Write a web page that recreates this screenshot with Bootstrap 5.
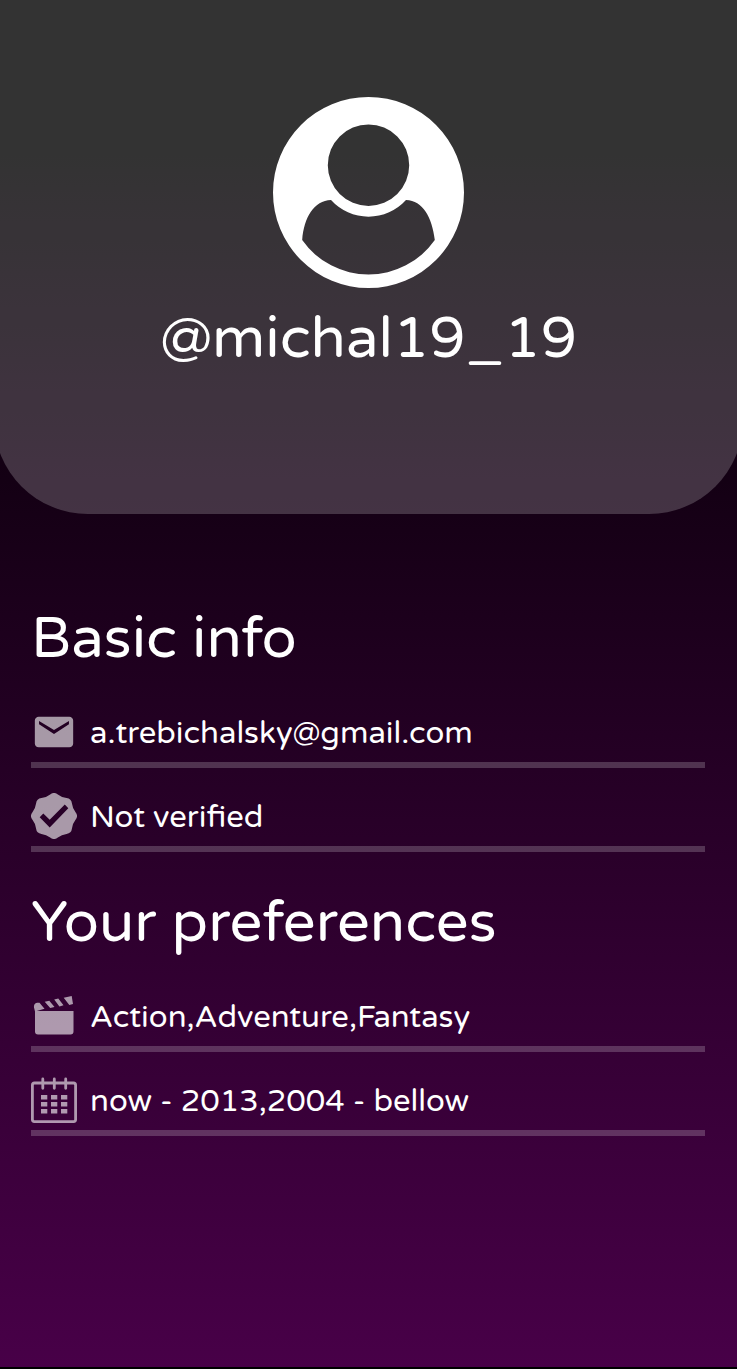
<!DOCTYPE html>
<html lang="en">
<head>
<meta charset="utf-8">
<meta name="viewport" content="width=device-width, initial-scale=1">
<title>Profile</title>
<link rel="stylesheet" href="https://cdn.jsdelivr.net/npm/bootstrap@5.3.0/dist/css/bootstrap.min.css">
<style>
  body {
    background: linear-gradient(#000 10%, #480048);
    color: #fff;
    font-family: "Varela Round", "Noto Sans", sans-serif;
    border-bottom: 2px solid #000;
  }
  .profile-head {
    margin: 0 -6px;
    padding: 97px 0 135px;
    gap: 11px;
    background: rgba(255, 255, 255, .2);
    border-radius: 0 0 94px 94px;
  }
  .avatar { width: 191px; height: 191px; }
  .title-text { font-size: 58px; line-height: 80px; font-weight: 400; }
  .info-area { padding: 85px 32px 0 31px; }
  .info-area section + section { margin-top: 31px; }
  .info-area .title-text { margin-bottom: 5px; }
  .info-row {
    height: 84px;
    padding-top: 18px;
    gap: 13px;
    font-size: 31px;
    line-height: 50px;
    border-bottom: 6px solid rgba(255, 255, 255, .2);
  }
  .info-row svg { width: 46px; height: 46px; flex: none; fill: #fff; opacity: .6; }
</style>
</head>
<body class="min-vh-100 overflow-x-hidden">
<header class="profile-head d-flex flex-column align-items-center">
  <svg class="avatar" viewBox="0 0 191 191" role="img" aria-label="Avatar">
    <path fill="#fff" fill-rule="evenodd" d="M95.500 0a95.500 95.500 0 1 1 0 191a95.500 95.500 0 1 1 0-191zM95.500 27.500a40.700 40.700 0 1 0 0 81.400a40.700 40.700 0 1 0 0-81.400zM58 103C41 103.500 31 120.500 29.200 143A81 81 0 0 0 161.800 143C159 120.500 150 103.500 133 103A50.500 50.500 0 0 1 58 103z"/>
  </svg>
  <h1 class="title-text mb-0">@michal19_19</h1>
</header>
<main class="info-area">
  <section>
    <h2 class="title-text">Basic info</h2>
    <div class="info-row d-flex align-items-center">
      <svg viewBox="0 0 24 24" aria-hidden="true"><path d="M20 4H4c-1.100 0-2 .9-2 2v12c0 1.100.9 2 2 2h16c1.100 0 2-.9 2-2V6c0-1.100-.9-2-2-2zm-.2 4L12 13 4.200 8V6.300L12 11l7.800-4.700z"/></svg>
      <span class="pt-1">a.trebichalsky@gmail.com</span>
    </div>
    <div class="info-row d-flex align-items-center">
      <svg viewBox="-23 -23 46 46" aria-hidden="true"><path fill-rule="evenodd" d="M21.550-3.850Q24.600 0 21.550 3.850Q18.500 7.700 17.950 12.550Q17.400 17.400 12.550 17.950Q7.700 18.500 3.850 21.550Q0 24.600-3.850 21.550Q-7.700 18.500-12.550 17.950Q-17.400 17.400-17.950 12.550Q-18.500 7.700-21.550 3.850Q-24.600 0-21.550-3.850Q-18.500-7.700-17.950-12.550Q-17.400-17.400-12.550-17.950Q-7.700-18.500-3.850-21.550Q0-24.600 3.850-21.550Q7.700-18.500 12.550-17.950Q17.400-17.400 17.950-12.550Q18.500-7.700 21.550-3.850zM-14.300 1.300L-4.300 11.500L14.300-7.700L10.800-11.500L-4.300 3.700L-10.700-2.500z"/></svg>
      <span class="pt-1">Not verified</span>
    </div>
  </section>
  <section>
    <h2 class="title-text">Your preferences</h2>
    <div class="info-row d-flex align-items-center">
      <svg viewBox="0 0 46 46" aria-hidden="true"><path d="M4 18h38.500v20.500q0 3-3 3H7q-3 0-3-3zM4 18.500L3 14.500Q2.500 10.500 6 9.700H8.500L13.500 15.800zM13.700 8.800L18.300 7.800L23.500 14L19.200 15zM23.200 6.500L27.300 5.600L32.500 12.200L28.400 13.400zM32.700 4.700L40.700 3L42 11L38.300 11.900z"/></svg>
      <span class="pt-1">Action,Adventure,Fantasy</span>
    </div>
    <div class="info-row d-flex align-items-center">
      <svg viewBox="0 0 46 46" aria-hidden="true"><path fill="none" stroke="#fff" stroke-width="2.800" stroke-linecap="round" d="M10.500 6H3.400q-2 0-2 2V42.600q0 2 2 2H42.600q2 0 2-2V8q0-2-2-2H3.400M11.800 2V11.300M23.300 2V11.300M34.700 2V11.300"/><path d="M10 18h6.300v4.500h-6.300zM20 18h6.300v4.500h-6.300zM30 18h6.300v4.500h-6.300zM10 25h6.300v4.500h-6.300zM20 25h6.300v4.500h-6.300zM30 25h6.300v4.500h-6.300zM10 32h6.300v4.500h-6.300zM20 32h6.300v4.500h-6.300zM30 32h6.300v4.500h-6.300z"/></svg>
      <span class="pt-1">now - 2013,2004 - bellow</span>
    </div>
  </section>
</main>
<script src="https://cdn.jsdelivr.net/npm/bootstrap@5.3.0/dist/js/bootstrap.bundle.min.js"></script>
</body>
</html>
